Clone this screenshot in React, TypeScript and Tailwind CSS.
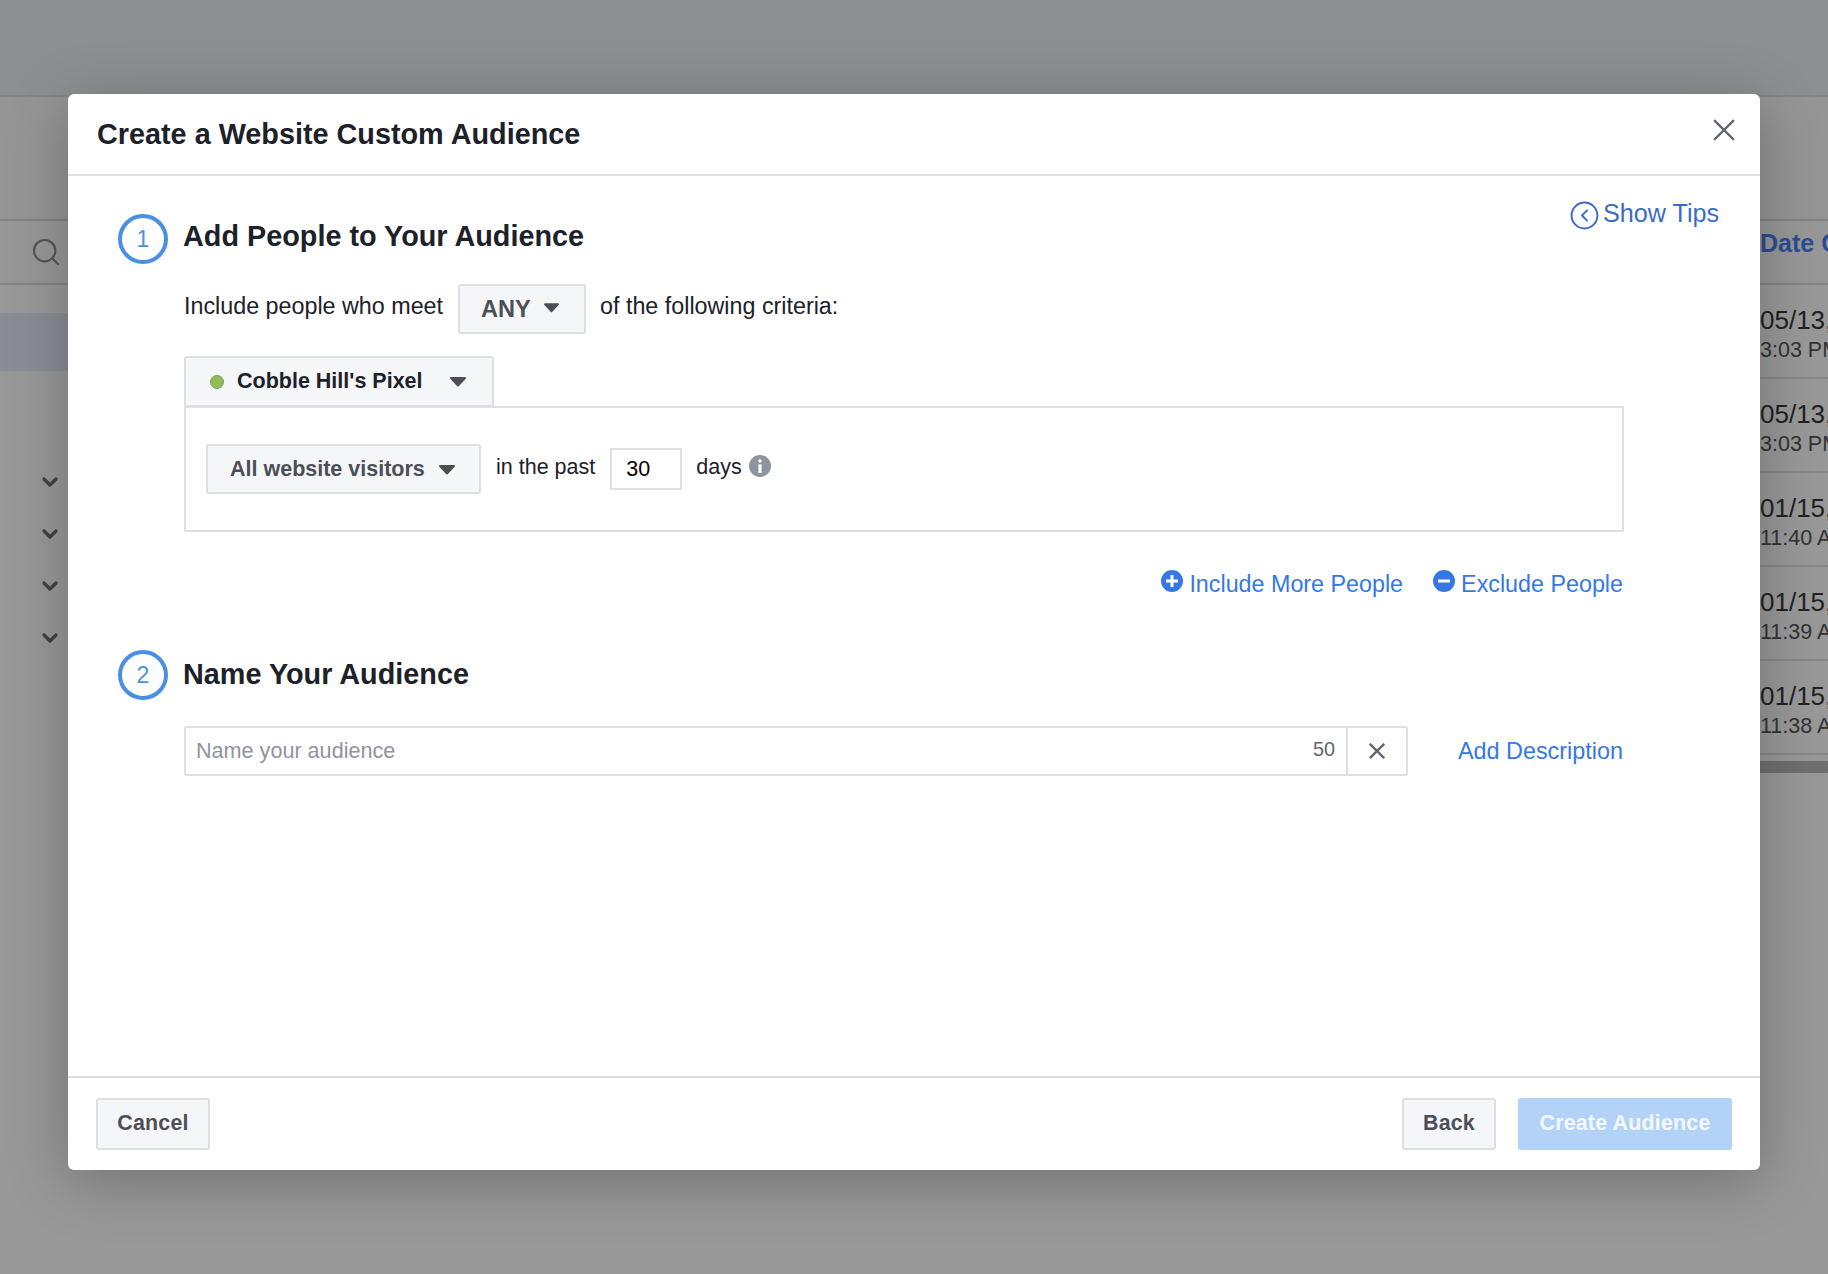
import { ChevronDown, CircleChevronLeft, Search } from "lucide-react"

const dates = [
    { day: "05/13", time: "3:03 PM" },
    { day: "05/13", time: "3:03 PM" },
    { day: "01/15", time: "11:40 AM" },
    { day: "01/15", time: "11:39 AM" },
    { day: "01/15", time: "11:38 AM" },
]

function Caret({ className }: { className: string }) {
    return (
        <svg viewBox="0 0 18 11" className={className} fill="#4b4f56" stroke="#4b4f56" strokeWidth="2" strokeLinejoin="round">
            <path d="M2 2h14l-7 7.5z" />
        </svg>
    )
}

function Cross({ className, width }: { className: string; width: number }) {
    return (
        <svg viewBox="0 0 20 20" className={className} stroke="#606770" strokeWidth={width} fill="none">
            <path d="M1 1l18 18M19 1L1 19" />
        </svg>
    )
}

function StepTitle({ n, title, lift }: { n: number; title: string; lift: string }) {
    return (
        <div className="flex items-center gap-[15px]">
            <div className="w-[50px] h-[50px] rounded-full border-[4px] border-[#4a90e2] flex items-center justify-center text-[#4a90e2] text-[23px] leading-none">{n}</div>
            <h2 className={`text-[28.8px] leading-[34px] font-bold text-[#1d2129] ${lift}`}>{title}</h2>
        </div>
    )
}

export default function App() {
    return (
        <div className="relative w-full h-[1274px] overflow-hidden bg-[#989898] font-['Liberation_Sans',Arial,sans-serif]">
            {/* page behind the dialog */}
            <div className="h-[97px] bg-[#8e8f90] border-b-2 border-[#848586]" />
            <div className="h-[124px] bg-[#959596] border-b-2 border-[#828282]" />
            <div className="h-[64px] bg-[#979797] border-b-2 border-[#828282] flex items-center justify-between">
                <Search className="w-[32px] h-[32px] ml-[30px] text-[#565656]" strokeWidth={1.6} />
                <span className="w-[68px] mb-[16px] text-[25px] font-bold text-[#2c4d92] whitespace-nowrap overflow-hidden">Date Created</span>
            </div>
            <div className="flex justify-between">
                <div className="w-[68px]">
                    <div className="h-[58px] mt-[28px] bg-[#8a8d93]" />
                    <div className="flex flex-col gap-[28px] mt-[99px] pl-[36px]">
                        {[0, 1, 2, 3].map(i => <ChevronDown key={i} className="w-[28px] h-[24px] text-[#414141]" strokeWidth={3.2} />)}
                    </div>
                </div>
                <div className="w-[68px] overflow-hidden">
                    {dates.map((d, i) => (
                        <div key={i} className="h-[94px] border-b-2 border-[#868686] pt-[20px] whitespace-nowrap">
                            <p className="text-[26px] leading-[31px] text-[#222]">{d.day}, 2018</p>
                            <p className="text-[21.5px] leading-[28px] text-[#333]">{d.time}</p>
                        </div>
                    ))}
                    <div className="h-[12px] mt-[6px] bg-[#6f6f6f]" />
                </div>
            </div>

            {/* dialog */}
            <div className="absolute left-[68px] top-[94px] w-[1692px] h-[1076px] bg-white rounded-[6px] flex flex-col shadow-[0_10px_60px_rgba(0,0,0,0.26)]">
                <div className="h-[82px] shrink-0 border-b-2 border-[#dddfe2] flex items-center justify-between pl-[29px] pr-[25px]">
                    <h1 className="text-[28.8px] leading-[34px] font-bold text-[#1d2129] mb-[1px]">Create a Website Custom Audience</h1>
                    <Cross className="w-[22px] h-[22px] mb-[9px]" width={2} />
                </div>

                <div className="relative flex-1 pl-[50px] pt-[38px]">
                    <div className="absolute top-[22px] left-[1501px] flex items-center gap-[3px] text-[#3b6cc4]">
                        <CircleChevronLeft className="w-[31px] h-[31px]" strokeWidth={1.5} />
                        <span className="text-[25.2px] leading-[30px] mb-[5px]">Show Tips</span>
                    </div>

                    <StepTitle n={1} title="Add People to Your Audience" lift="mb-[6px]" />

                    <div className="ml-[66px] w-[1440px]">
                        <div className="flex items-center mt-[20px] text-[23.3px] text-[#1d2129]">
                            <span className="mb-[5px]">Include people who meet</span>
                            <div className="ml-[15px] mr-[14px] w-[128px] h-[50px] rounded-[3px] border-2 border-[#dddfe2] bg-[#f5f6f7] flex items-center pl-[21px] gap-[12px]">
                                <span className="text-[23.6px] font-bold text-[#4b4f56] mt-[2px]">ANY</span>
                                <Caret className="w-[17px] h-[11px] mb-[3px]" />
                            </div>
                            <span className="mb-[5px]">of the following criteria:</span>
                        </div>

                        <div className="mt-[22px] w-[310px] h-[51px] rounded-t-[3px] border-2 border-[#dddfe2] bg-[#f5f6f7] flex items-center pl-[24px]">
                            <span className="w-[14px] h-[14px] rounded-full bg-[#8ebd5a] border border-[#7aa84a]" />
                            <span className="ml-[13px] text-[21.5px] font-bold text-[#1d2129]">Cobble Hill's Pixel</span>
                            <Caret className="w-[18px] h-[11px] ml-[26px]" />
                        </div>

                        <div className="h-[126px] -mt-[1px] border-2 border-[#dddfe2] flex items-center pl-[20px] text-[21.5px] text-[#1d2129]">
                            <div className="w-[275px] h-[50px] rounded-[3px] border-2 border-[#dddfe2] bg-[#f5f6f7] flex items-center pl-[22px] gap-[13px]">
                                <span className="font-bold text-[#4b4f56]">All website visitors</span>
                                <Caret className="w-[18px] h-[11px]" />
                            </div>
                            <span className="ml-[15px] mb-[4px]">in the past</span>
                            <input readOnly value="30" className="ml-[15px] w-[72px] h-[42px] border-2 border-[#dddfe2] pl-[14px] text-black outline-none" />
                            <span className="ml-[14px] mb-[4px]">days</span>
                            <svg viewBox="0 0 22 22" className="w-[22px] h-[22px] ml-[7px] mb-[6px]">
                                <circle cx="11" cy="11" r="11" fill="#8d949e" />
                                <circle cx="11" cy="6" r="1.8" fill="#fff" />
                                <rect x="9.4" y="9.4" width="3.2" height="8.6" fill="#fff" />
                            </svg>
                        </div>

                        <div className="flex justify-end items-center gap-[30px] mt-[38px] pr-[1px] text-[23.3px] leading-[28px] text-[#3578e5]">
                            <span className="flex items-center gap-[6px]">
                                <svg viewBox="0 0 22 22" className="w-[22px] h-[22px] mb-[6px]">
                                    <circle cx="11" cy="11" r="11" fill="#3578e5" />
                                    <path d="M11 5v12M5 11h12" stroke="#fff" strokeWidth="3" />
                                </svg>
                                Include More People
                            </span>
                            <span className="flex items-center gap-[6px]">
                                <svg viewBox="0 0 22 22" className="w-[22px] h-[22px] mb-[6px]">
                                    <circle cx="11" cy="11" r="11" fill="#3578e5" />
                                    <path d="M5 11h12" stroke="#fff" strokeWidth="3" />
                                </svg>
                                Exclude People
                            </span>
                        </div>
                    </div>

                    <div className="mt-[52px]">
                        <StepTitle n={2} title="Name Your Audience" lift="mb-[3px]" />
                    </div>

                    <div className="ml-[66px] w-[1440px] mt-[26px] flex items-center justify-between">
                        <div className="w-[1224px] h-[50px] rounded-[3px] border-2 border-[#dddfe2] flex items-center">
                            <input readOnly placeholder="Name your audience" className="flex-1 h-full pl-[10px] text-[21.6px] outline-none placeholder:text-[#90949c]" />
                            <span className="text-[19.8px] text-[#606770] pr-[11px] mb-[3px]">50</span>
                            <div className="w-[60px] h-full border-l-2 border-[#dddfe2] flex items-center justify-center">
                                <Cross className="w-[16px] h-[16px]" width={3} />
                            </div>
                        </div>
                        <span className="text-[23.4px] text-[#3578e5] pr-[1px] mt-[2px]">Add Description</span>
                    </div>
                </div>

                <div className="h-[94px] shrink-0 border-t-2 border-[#dddfe2] flex items-center justify-between px-[28px] text-[21.4px] font-bold tracking-[0.2px]">
                    <button className="w-[114px] h-[52px] pb-[2px] rounded-[3px] border-2 border-[#dddfe2] bg-[#f5f6f7] text-[#4b4f56]">Cancel</button>
                    <div className="flex gap-[22px]">
                        <button className="w-[94px] h-[52px] pb-[2px] rounded-[3px] border-2 border-[#dddfe2] bg-[#f5f6f7] text-[#4b4f56]">Back</button>
                        <button className="w-[214px] h-[52px] pb-[2px] rounded-[3px] bg-[#b3d2f8] text-[#f3f8fe]">Create Audience</button>
                    </div>
                </div>
            </div>
        </div>
    )
}
